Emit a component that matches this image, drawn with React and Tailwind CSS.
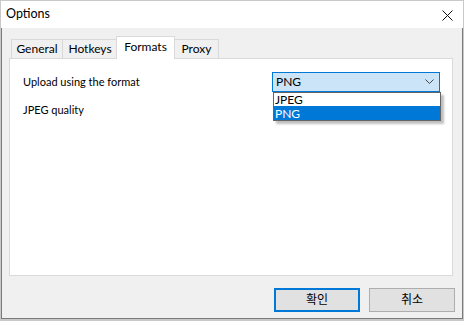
export default function App() {
  const font = { fontFamily: "Lato,'Noto Sans CJK KR',sans-serif" };
  return (
    <div
      className="w-[464px] h-[321px] border-t border-x border-b-2 border-[#c9c9c9] text-[12px] text-black"
      style={font}
    >
      <div className="w-full h-full flex flex-col bg-[#f0f0f0]">
        {/* title bar */}
        <div className="h-[27px] bg-white flex items-center justify-between pl-[5px] pr-[10px]">
          <span className="text-[12.5px] leading-[14px] pb-[1px]">Options</span>
          <svg width="11" height="11" viewBox="0 0 11 11" className="mt-[1px]">
            <path d="M0.5 0.5 L10.5 10.5 M10.5 0.5 L0.5 10.5" stroke="#111" strokeWidth="1" />
          </svg>
        </div>
        {/* body */}
        <div className="flex-1 flex flex-col border-x border-b border-[#7a7a7a] pl-[7px] pr-[7px] pt-[8px]">
          {/* tabs */}
          <div className="flex items-end h-[22px] pl-[2px] mr-[2px]">
            <div className="w-[52px] h-[19px] border-l border-t border-r border-[#d9d9d9] flex items-center justify-center leading-[14px]">
              General
            </div>
            <div className="w-[55px] h-[19px] border-t border-r border-[#d9d9d9] flex items-center justify-center leading-[14px]">
              Hotkeys
            </div>
            <div className="relative z-10 -ml-[2px] w-[59px] h-[23px] -mb-px bg-white border-l border-t border-r border-[#d9d9d9] flex items-center justify-center leading-[14px] pb-[3px]">
              Formats
            </div>
            <div className="w-[44px] h-[19px] border-t border-r border-[#d9d9d9] flex items-center justify-center leading-[14px]">
              Proxy
            </div>
          </div>
          {/* panel */}
          <div className="relative h-[218px] mr-[2px] bg-white border border-[#d9d9d9] pl-[13px] pr-[12px] pt-[13px] flex flex-col text-[11px]">
            <div className="flex items-center justify-between h-[20px]">
              <span className="leading-[14px]">Upload using the format</span>
              <div className="w-[168px] h-[20px] bg-[#cce4f7] border border-[#0078d7] flex items-center justify-between pl-[3px] pr-[5px] text-[12px]">
                <span className="leading-[14px]">PNG</span>
                <svg width="9" height="6" viewBox="0 0 9 6">
                  <path d="M0.5 0.5 L4.5 4.5 L8.5 0.5" stroke="#444" strokeWidth="1" fill="none" />
                </svg>
              </div>
            </div>
            <div className="flex items-center h-[23px] mt-[6px]">
              <span className="leading-[14px] flex-1">JPEG quality</span>
              <div className="w-[11px] h-[21px] bg-[#0078d7] mt-[2px] mr-[34px]" />
              <div className="w-[42px] h-[23px] border border-[#7a7a7a] bg-white" />
            </div>

            {/* dropdown list overlay */}
            <div className="absolute left-[263px] top-[33px] w-[168px] h-[29px] bg-white border border-[#646464] shadow-[3px_3px_2px_rgba(0,0,0,0.25)] flex flex-col text-[12px]">
              <div className="h-[13px] flex items-center pl-[1px] leading-[13px] overflow-hidden">JPEG</div>
              <div className="h-[14px] flex items-center pl-[1px] leading-[13px] overflow-hidden bg-[#0078d7] text-white">PNG</div>
            </div>
          </div>
          {/* buttons */}
          <div className="flex justify-end gap-[9px] mt-[12px]">
            <button className="w-[86px] h-[24px] bg-[#e1e1e1] border-2 border-[#0078d7] flex items-center justify-center leading-[14px]">
              확인
            </button>
            <button className="w-[86px] h-[24px] bg-[#e1e1e1] border border-[#adadad] flex items-center justify-center leading-[14px]">
              취소
            </button>
          </div>
        </div>
      </div>
    </div>
  );
}
